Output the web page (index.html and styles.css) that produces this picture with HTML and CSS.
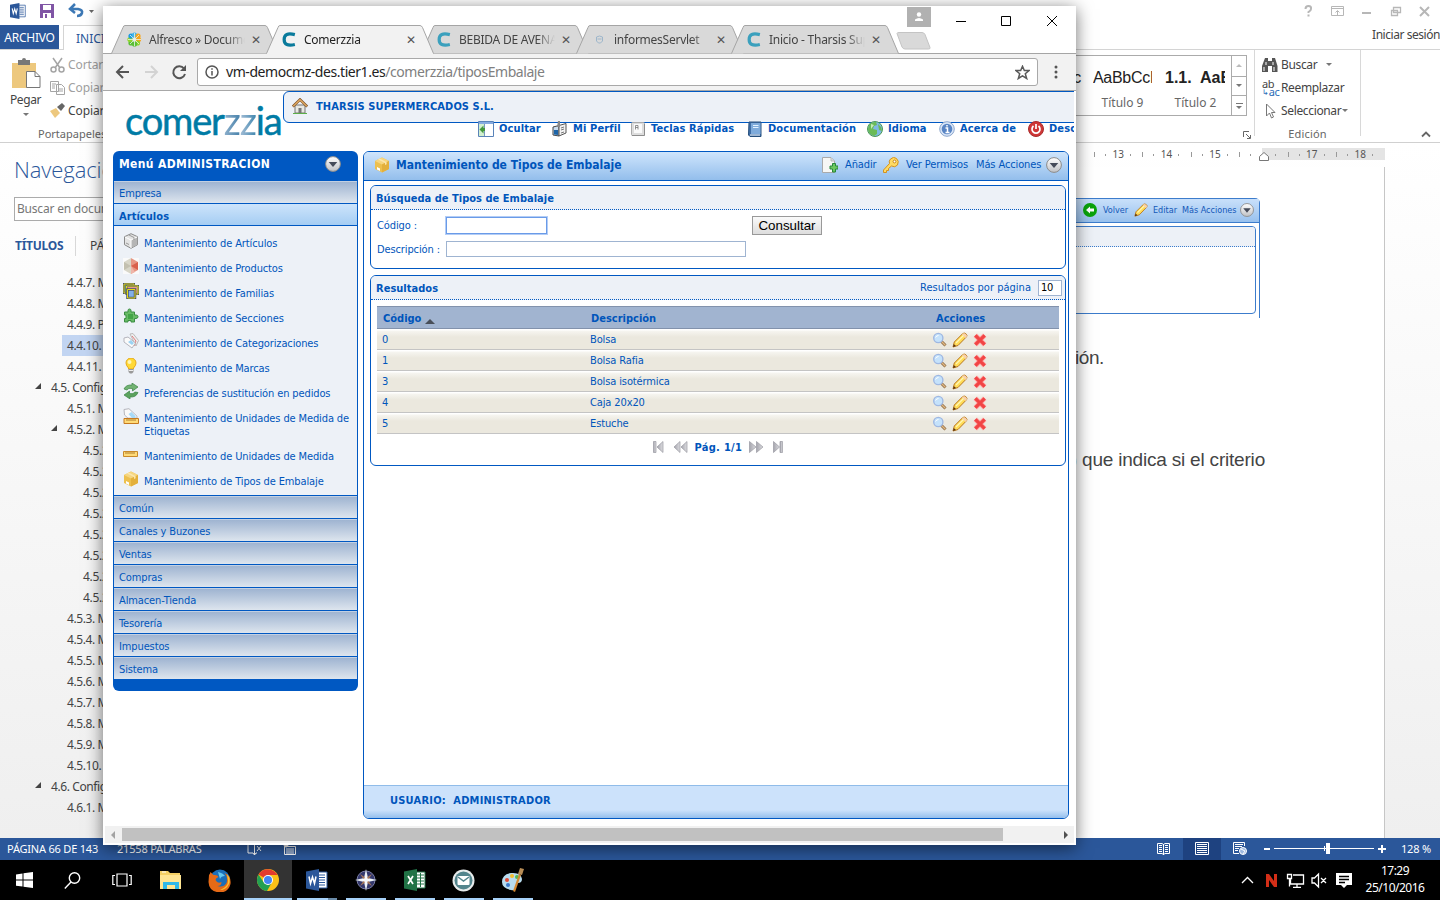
FILE: index.html
```html
<!DOCTYPE html>
<html lang="es">
<head>
<meta charset="utf-8">
<title>Comerzzia</title>
<link rel="stylesheet" href="styles.css">
</head>
<body>
<svg class="defs" width="0" height="0">
  <defs>
    <linearGradient id="silver" x2="0" y2="1"><stop offset="0" stop-color="#fff"/><stop offset="1" stop-color="#bfc1c5"/></linearGradient>
    <linearGradient id="metal" x2="1" y2="0"><stop offset="0" stop-color="#a5a5ad"/><stop offset="1" stop-color="#dcdce0"/></linearGradient>
    <symbol id="i-box" viewBox="0 0 16 16"><path d="M8 .5 15 4v8l-7 3.5L1 12V4z" fill="#edc04e"/><path d="M8 .5 15 4 8 7.500 1 4z" fill="#f6d680"/><path d="M8 7.500 15 4v8l-7 3.500z" fill="#e3b03c"/><path d="m4 2.500 7 3.600v2l1.600-.8V5.200L5.800 1.600z" fill="#fbe6ac"/><path d="m3 10 3 1.500V14l-3-1.500z" fill="#fff"/></symbol>
    <symbol id="i-cube" viewBox="0 0 16 16"><path d="m8 .7 6.500 3v8L8 15.300l-6.500-3.600v-8z" fill="#e4e4e4" stroke="#888"/><path d="M8 7v8l6.300-3.500V4z" fill="#b5b5b5"/><path d="m2 4 6 3 6-3M8 7v8" fill="none" stroke="#fff"/><path d="m6 2 5 2.500V7M3 10l3 1.500" fill="none" stroke="#999"/></symbol>
    <symbol id="i-prod" viewBox="0 0 16 16"><path d="M0 0h16v16H0z" fill="#fafafa"/><path d="m8 0 7 4v8l-7 4z" fill="#e79583"/><path d="M8 0 1 4v8l7 4z" fill="#d8d6c8"/><path d="m8 8 7-4v8z" fill="#d9604c"/><path d="M8 8 1 12V4z" fill="#c3c0af"/><path d="m8 8 4 6-4 2z" fill="#efb5a9"/></symbol>
    <symbol id="i-fam" viewBox="0 0 16 16"><path d="M1 1h10v9H1z" fill="#78c47a" stroke="#46506a" stroke-width="2"/><path d="M1 1h10v9H1z" fill="none" stroke="#e5dc16"/><path d="M3.500 3h12v8h-12z" fill="#e89a8c" stroke="#46506a" stroke-width="2"/><path d="M3.500 3h11.500v8H3.500z" fill="none" stroke="#e5dc16"/><path d="M4.500 6.500h7.500v8.500H4.500z" fill="#82b0e8" stroke="#46506a" stroke-width="2.500"/><path d="M4.500 6.500h7.500v8.500H4.500z" fill="none" stroke="#e5dc16"/></symbol>
    <symbol id="i-puz" viewBox="0 0 16 16"><path d="M1.500 4H5V2.500Q5 1 6.500 1T8 2.500V4h3.500v3H13q2 0 2 1.700T13 10.500h-1.500V14H8v-1.500H5V14H1.500v-3.500H3V7H1.500z" fill="#68bb66" stroke="#3b8d42"/><path d="M5 6h5v5H5z" fill="#43a546"/></symbol>
    <symbol id="i-tags" viewBox="0 0 16 16"><path d="m7 1 3-.5 5.500 7L13 13z" fill="#eee" stroke="#bbb"/><path d="m9 3 4 5-2 5" fill="none" stroke="#e17878"/><path d="m1 5 4-1 7.500 6L9 15 1 9z" fill="#fafafa" stroke="#b5b5bd"/><path d="m5 9 3-2 3 3-2 2z" fill="#9cd3f3"/></symbol>
    <symbol id="i-bulb" viewBox="0 0 16 16"><path d="M5.500 10Q3 7.500 3 5a5 5 0 0 1 10 0q0 2.500-2.500 5v1h-5z" fill="#ffd936" stroke="#e5a91c"/><circle cx="6.500" cy="4" r="2" fill="#fff6b7"/><path d="M5.500 11h5v3L9 15.500H7L5.500 14z" fill="#999"/><path d="M6 12.500h4" stroke="#eee"/></symbol>
    <symbol id="i-cycle" viewBox="0 0 16 16"><path d="M1 6q2-4.500 8-4V0l6 4-5.500 4V5.500Q5 4.500 4 7z" fill="#72b373" stroke="#3a8344" stroke-width=".7"/><path d="M15 9.500q-2 5-8 4.500v2L1 12l5.500-4v2.500q4 1 5.500-1.500z" fill="#5ba35d" stroke="#3a8344" stroke-width=".7"/></symbol>
    <symbol id="i-rul" viewBox="0 0 16 16"><path d="M.5 5.500h14v5H.5z" fill="#ffdb78" stroke="#c98a2b"/><path d="M3 6v2m2-2v2m2-2v2m2-2v2m2-2v2" stroke="#9b651a" stroke-width=".8"/></symbol>
    <symbol id="i-tagrul" viewBox="0 0 16 16"><path d="M1 1.500 6 .7l8 7.500v2h-9L1.500 7z" fill="#fafafa" stroke="#b6b6bd"/><path d="m5.500 6 3-2 4 4v2H9z" fill="#a6daf8"/><path d="M1 10.500h14.500v5H1z" fill="#ffdb78" stroke="#c67920"/><path d="M4 11v2m2-2v2m2-2v2m2-2v2m2-2v2" stroke="#9b651a" stroke-width=".8"/></symbol>
    <symbol id="i-down" viewBox="0 0 16 16"><circle cx="8" cy="8" r="7.400" fill="url(#silver)" stroke="#8b8b8b"/><path d="M3.700 6h8.600L8 11z" fill="#454b59"/></symbol>
    <symbol id="i-home" viewBox="0 0 16 16"><path d="M3 7h10v8H3z" fill="#e8e8e2" stroke="#777"/><path d="M6.500 10h3v5.500h-3z" fill="#777"/><path d="m.8 8.500 7.200-7 7.200 7" fill="none" stroke="#80542a" stroke-width="2.600"/><path d="m1.200 8.300 6.800-6.600 6.800 6.600" fill="none" stroke="#e2ac63" stroke-width="1.200"/><path d="M1 15.500h14" stroke="#5cae48"/></symbol>
    <symbol id="i-hide" viewBox="0 0 16 16"><path d="M.5.500h15v15H.5z" fill="#fff" stroke="#5a83b9"/><path d="M1 1h14v2H1z" fill="#86abe0"/><path d="M1 3h5v12H1z" fill="#d2efcf"/><path d="M6.500 3v12" stroke="#7698be"/><path d="m5.500 4.500-4 4 4 4V10H7V7H5.500z" fill="#43973d"/></symbol>
    <symbol id="i-prof" viewBox="0 0 16 16"><path d="m1 6 6-1.500V15l-6-1z" fill="#caddef" stroke="#444"/><path d="m7 4.500 7-2V12l-7 3z" fill="#f2f2f2" stroke="#555"/><path d="M6 0h2v6H5z" fill="#888"/><path d="M2 9h4v5l-4-.5z" fill="#1d65a8"/><path d="m9 7 3-1M9 9l3-1m-3 4 3-1" stroke="#777"/></symbol>
    <symbol id="i-key" viewBox="0 0 16 16"><rect x="1.500" y="1.500" width="13" height="13" rx="1" fill="#ddd" stroke="#aaa"/><path d="M4 3h8v9H4z" fill="#fafafa"/><path d="M5.500 8.500v-4h2.500v4m-2.500-2h2.500" fill="none" stroke="#777" stroke-width=".8"/><path d="M2 14.500h12.500V3" fill="none" stroke="#8d8d8d"/></symbol>
    <symbol id="i-book" viewBox="0 0 16 16"><path d="M2 1h12v14.500H3L1.500 14z" fill="#3f6ea6" stroke="#264f7d"/><path d="M4 2h9.500v11H4z" fill="#7fabdb"/><path d="M6 4.500h5.500M6 6.500h5.500" stroke="#e4f2ff"/><path d="M3 14h10" stroke="#fff"/></symbol>
    <symbol id="i-world" viewBox="0 0 16 16"><circle cx="8" cy="8" r="7.500" fill="#7fb8e4" stroke="#4d9a54"/><path d="M2 4Q5 .5 9 1l1 3-3 1-1 3 4 1v4l-3 2Q1 13 1 8zM11 3l3 3 1 4-3-1z" fill="#6abb56"/><path d="m4 3 3 1-3 4z" fill="#c6edb5"/></symbol>
    <symbol id="i-info" viewBox="0 0 16 16"><circle cx="8" cy="8" r="7.300" fill="#d9e6f7" stroke="#8da7cd"/><circle cx="8" cy="8" r="5.300" fill="#5985c4"/><path d="M6.500 7H8.500v4.500M6.500 11.500h4M8 4v1.500" stroke="#fff" stroke-width="1.500" fill="none"/></symbol>
    <symbol id="i-power" viewBox="0 0 16 16"><circle cx="8" cy="8" r="7.500" fill="#cf3737" stroke="#a92c2c"/><path d="M5.500 5a4 4 0 1 0 5 0M8 3v5" stroke="#fff" stroke-width="1.700" fill="none"/></symbol>
    <symbol id="i-add" viewBox="0 0 16 16"><path d="M.5.500H9l3.500 3.500v11.500H.5z" fill="#f7f7f5" stroke="#aaa"/><path d="M9 1v3h3" fill="#ddd" stroke="#bbb"/><path d="M10.500 6.500h3v2.500H16v3h-2.500v3h-3v-3H8V9h2.500z" fill="#6cc75e" stroke="#26873a"/></symbol>
    <symbol id="i-perm" viewBox="0 0 16 16"><path d="m6.500 6.500-6 6.500v2.500h3v-2h2v-2l3-2.500Q12 11 14.500 8q2-4-1-6.500T7.500 2q-2 2-1 4.500z" fill="#ffdb63" stroke="#d29120"/><circle cx="11.500" cy="4.500" r="1.400" fill="#fff" stroke="#c4851b"/></symbol>
    <symbol id="i-zoom" viewBox="0 0 16 16"><path d="m9 9 4.500 4.500" stroke="#8c6c48" stroke-width="3"/><path d="m9 9 4.300 4.300" stroke="#e2b780" stroke-width="1.300"/><circle cx="6.300" cy="6" r="4.600" fill="#c5e2fb" stroke="#9fb8e2" stroke-width="1.400"/><path d="M3.500 5.500q1-2 3-2" stroke="#fff" fill="none"/></symbol>
    <symbol id="i-pen" viewBox="0 0 16 16"><path d="m1 15 1.300-5 8.500-8.500q1.500-1 3.200.3t.5 3L6 13.500z" fill="#ffdc57" stroke="#b8761f"/><path d="m10 2.500 1.500-1.300q3 0 3.500 3L13.500 6z" fill="#f7d0ac"/><path d="m4 11 7.500-7.500" stroke="#fff6b4" stroke-width="1.300"/><path d="m1 15 .8-3 2.200 2z" fill="#583413"/></symbol>
    <symbol id="i-del" viewBox="0 0 16 16"><path d="m3.300 3.300 9.400 9.400m0-9.400-9.400 9.400" stroke="#ffa4a4" stroke-width="4.800"/><path d="m3.300 3.300 9.400 9.400m0-9.400-9.400 9.400" stroke="#f14545" stroke-width="3.300"/></symbol>
    <symbol id="i-star" viewBox="0 0 14 14"><path d="m7 1.200 1.700 4h4.400l-3.500 2.900 1.300 4.500L7 10.100l-3.900 2.500 1.300-4.500L.9 5.200h4.400z" fill="none" stroke="#5a5a5a" stroke-width="1.400"/></symbol>
    <symbol id="i-tab" viewBox="0 0 168 29" preserveAspectRatio="none"><path d="M.5 28.500 12 2.500Q12.500.500 14 .500h140q1.500 0 2.500 2l11 26" stroke="#a5a5a5"/></symbol>
    <symbol id="i-c" viewBox="0 0 14 14"><path d="M12 2.500Q2 0 2 7t10 4.700" fill="none" stroke="currentColor" stroke-width="3"/></symbol>
    <symbol id="i-word" viewBox="0 0 22 22"><path d="M10 3h11v16H10z" fill="#fff" stroke="#2b579a"/><path d="M13 6h6m-6 2.500h6M13 11h6m-6 2.500h6M13 16h6" stroke="#2b579a"/><path d="M0 2.500 13 0v22L0 19.500z" fill="#2b579a"/><path d="m3 7.500 1.500 7 2-6.500 2 6.500 1.500-7" fill="none" stroke="#fff" stroke-width="1.500"/></symbol>
  </defs>
</svg>
<div class="desktop">
  <section class="word">
    <header class="word-title">
      <svg class="quick" width="103" height="25" viewBox="0 0 103 25">
        <svg x="10" y="3" width="16" height="16"><use href="#i-word"/></svg>
        <path d="M40 4h14v14H40z" fill="#8055a5"/><path d="M43 5h8v5h-8zM43 13h8v5h-8z" fill="#fff"/><path d="M45 14h2v4h-2z" fill="#8055a5"/>
        <path d="M75 4 70 9l5 4M70.500 9H78q5 1 4 4t-5 3" fill="none" stroke="#3c78b5" stroke-width="2.500"/><path d="M89 10h5l-2.500 3z" fill="#666"/>
      </svg>
      <svg width="140" height="24" viewBox="0 0 140 24" fill="none" stroke="#b7b7b7" stroke-width="1.500">
        <path d="M5.500 9q0-3 3-3t2.500 3q0 1.500-2.500 3v1m0 1.500v2" stroke-width="2"/><path d="M31.500 6.500h12v9h-12zM31.500 8.500h12M37.500 15v-4m-2 1.500 2-2 2 2" stroke-width="1"/><path d="M62 13h9" stroke-width="2"/><path d="M93.500 7.500h7v5h-7zM91.500 10.500h6v5h-6z" stroke-width="1.300"/><path d="m120 7 9 9m0-9-9 9" stroke-width="2"/>
      </svg>
    </header>
    <div class="word-tabs"><span class="file">ARCHIVO</span><span class="start">INICIO</span><span class="login">Iniciar sesión</span></div>
    <div class="ribbon">
      <div class="clip">
        <div class="clip-row">
          <div class="paste">
            <svg width="30" height="34" viewBox="0 0 30 34"><path d="M1 5h24v25H1z" fill="#edc87e"/><path d="M7 2h4q0-2 2-2t2 2h4v5H7z" fill="#777"/><path d="M15.500 13.500H24l5 5v11H15.500z" fill="#fff" stroke="#777"/><path d="M24 13.500v5h5" fill="none" stroke="#777"/></svg>
            <span>Pegar</span><i class="caret"></i>
          </div>
          <div class="clip-list">
            <div class="off"><svg width="15" height="16" viewBox="0 0 15 16" fill="none" stroke="#a5a5a5" stroke-width="1.500"><path d="m3 1 7 10M12 1 5 11"/><circle cx="3.500" cy="12.500" r="2.500"/><circle cx="11.500" cy="12.500" r="2.500"/></svg>Cortar</div>
            <div class="off"><svg width="15" height="16" viewBox="0 0 15 16" fill="#fff" stroke="#a5a5a5"><path d="M.5 1.500h8v10h-8zM6.500 4.500h5l3 3v7h-8z"/><path d="M2 4h4M2 6h3M2 8h3M8 9h5M8 11h5"/></svg>Copiar</div>
            <div><svg width="15" height="16" viewBox="0 0 15 16"><path d="m0 8 6-3 4 5-5 5z" fill="#edc87e"/><path d="m7 4 5-4 3 3-4 5z" fill="#666"/></svg>Copiar formato</div>
          </div>
        </div>
        <div class="cap">Portapapeles</div>
      </div>
      <div class="styles">
        <div class="gallery">
          <div class="sty part"><b>c</b></div>
          <div class="sty nine"><b>AaBbCcD</b><span>Título 9</span></div>
          <div class="sty two"><b>1.1.&nbsp; AaB</b><span>Título 2</span></div>
          <div class="spin"><div><i class="caret up"></i></div><div><i class="caret"></i></div><div><i class="bar"></i><i class="caret"></i></div></div>
        </div>
        <svg class="launcher" width="8" height="8" viewBox="0 0 8 8" fill="none" stroke="#666"><path d="M.5 6V.5H6M3 3l4 4M7.500 4v3.500H4"/></svg>
      </div>
      <div class="edit">
        <div><svg width="16" height="14" viewBox="0 0 16 14"><path d="M3 0h3v3h4V0h3l2.500 8v6H10V8H6v6H0V8z" fill="#555"/><path d="M2 9v4m10-4v4M4 4v3m7-3v3" stroke="#fff"/></svg>Buscar<i class="caret"></i></div>
        <div><span class="abac"><em>ab</em><em>↳<b>ac</b></em></span>Reemplazar</div>
        <div><svg width="16" height="16" viewBox="0 0 16 16"><path d="M4.500 1v12l3-3 2 5 2-1-2-4.500h3.500z" fill="#fff" stroke="#777"/></svg>Seleccionar<i class="caret near"></i></div>
        <div class="cap">Edición</div>
      </div>
      <svg class="fold" width="10" height="7" viewBox="0 0 10 7" fill="none" stroke="#666" stroke-width="1.800"><path d="m1 5.500 4-4 4 4"/></svg>
    </div>
    <div class="word-body">
      <nav class="navpane">
        <h2>Navegación</h2>
        <div class="find">Buscar en documento</div>
        <div class="navtabs"><b>TÍTULOS</b><span>PÁGINAS</span></div>
        <ul>
          <li>4.4.7. M</li><li>4.4.8. M</li><li>4.4.9. P</li><li class="sel">4.4.10.</li><li>4.4.11.</li>
          <li class="top">4.5. Configuración</li><li>4.5.1. M</li><li class="open">4.5.2. M</li>
          <li class="sub">4.5.2.1</li><li class="sub">4.5.2.2</li><li class="sub">4.5.2.3</li><li class="sub">4.5.2.4</li><li class="sub">4.5.2.5</li><li class="sub">4.5.2.6</li><li class="sub">4.5.2.7</li><li class="sub">4.5.2.8</li>
          <li>4.5.3. M</li><li>4.5.4. M</li><li>4.5.5. M</li><li>4.5.6. M</li><li>4.5.7. M</li><li>4.5.8. M</li><li>4.5.9. M</li><li>4.5.10.</li>
          <li class="top">4.6. Configuración</li><li>4.6.1. M</li>
        </ul>
      </nav>
      <div class="doc">
        <div class="ruler"><span>13</span><span>14</span><span>15</span><span class="blank"></span><span>17</span><span>18</span><svg width="10" height="9" viewBox="0 0 10 9"><path d="M.5 8.500v-4l4.500-4 4.500 4v4z" fill="#fff" stroke="#777"/></svg></div>
        <div class="page">
          <div class="shot">
            <div class="shot-head"><svg width="14" height="14" viewBox="0 0 14 14"><circle cx="7" cy="7" r="7" fill="#0aa30a"/><path d="M3 7l4-3.500v2h4v3H7v2z" fill="#fff"/></svg><span class="s1">Volver</span><svg width="14" height="14"><use href="#i-pen"/></svg><span class="s2">Editar</span><span class="s3">Más Acciones</span><svg width="14" height="14"><use href="#i-down"/></svg></div>
            <div class="shot-box"><div></div></div>
          </div>
          <p class="p1">descripción.</p>
          <p class="p2">(campo) que indica si el criterio</p>
        </div>
      </div>
    </div>
    <footer class="status">
      <span>PÁGINA 66 DE 143</span><span class="words">21558 PALABRAS</span>
      <svg width="50" height="14" viewBox="0 0 50 14" fill="none" stroke="#fff"><path d="M1 1v10h5l1.500 2L9 11h1M7.500 1v12M10 4l4 5m0-5-4 5"/><path d="M37.500 4.500h11v8h-11zM39 7h8M39 9h8M39 11h8"/><circle cx="39" cy="3" r="2" fill="#fff"/></svg>
      <div class="views">
        <svg class="v1" width="38" height="22" viewBox="0 0 38 22" fill="none" stroke="#fff"><path d="M12.500 5.500H17l1.500 1 1.500-1h4.500v10H20l-1.500 1-1.500-1h-4.500zM18.500 6v11M14 7.500h3m3 0h3M14 9.500h3m3 0h3m-9 2h3m3 0h3m-9 2h3m3 0h3"/></svg>
        <svg class="v2" width="38" height="22" viewBox="0 0 38 22" fill="none" stroke="#fff"><path d="M12.500 4.500h13v12h-13zM14 6.500h10M14 8.500h10M14 10.500h10M14 12.500h10M14 14.500h10"/></svg>
        <svg width="38" height="22" viewBox="0 0 38 22" fill="none" stroke="#fff"><path d="M23.500 8V4.500h-11v11H18M14 6.500h8M14 8.500h7M14 10.500h4M14 12.500h3"/><circle cx="22" cy="13" r="3.500" fill="#9cb8df"/><path d="m20 11 4 2-2 3"/></svg>
      </div>
      <svg width="124" height="14" viewBox="0 0 124 14" stroke="#fff"><path d="M1 7h6" stroke-width="2"/><path d="M11 6.500h100M61.500 4v5"/><path d="M63 1h4v11h-4z" fill="#fff" stroke="none"/><path d="M115 7h8m-4-4v8" stroke-width="2"/></svg>
      <span class="pct">128 %</span>
    </footer>
  </section>

  <section class="chrome">
    <header class="strip">
      <div class="tab"><svg class="shape"><use href="#i-tab"/></svg><svg class="fav" width="15" height="15" viewBox="0 0 15 15"><g fill="#5abf35"><circle cx="11.500" cy="7.500" r="2.600" fill="#f7a51b"/><circle cx="10.500" cy="11" r="2.600" fill="#8fd42c"/><circle cx="7.500" cy="12" r="2.600"/><circle cx="4" cy="11" r="2.600"/><circle cx="3" cy="7.500" r="2.600" fill="#8fd42c"/><circle cx="4" cy="4" r="2.600" fill="#1d9be0"/><circle cx="7.500" cy="3" r="2.600" fill="#3fb3ee"/><circle cx="11" cy="4" r="2.600" fill="#f7a51b"/></g><path d="M7.500 1v13M1 7.500h13M3 3l9 9m0-9-9 9" stroke="#e8f4e8" stroke-width=".8"/></svg><span>Alfresco » Documentos</span><i>✕</i></div>
      <div class="tab on"><svg class="shape"><use href="#i-tab"/></svg><svg class="fav" width="14" height="15"><use href="#i-c"/></svg><span>Comerzzia</span><i>✕</i></div>
      <div class="tab"><svg class="shape"><use href="#i-tab"/></svg><svg class="fav" width="14" height="15"><use href="#i-c"/></svg><span>BEBIDA DE AVENA Y</span><i>✕</i></div>
      <div class="tab"><svg class="shape"><use href="#i-tab"/></svg><svg class="fav" width="14" height="15" viewBox="0 0 14 15"><path d="M4 5q3-2 6 0v4L8 11H6L4 9zM5 7h4" fill="none" stroke="#9db6cb"/></svg><span>informesServlet</span><i>✕</i></div>
      <div class="tab"><svg class="shape"><use href="#i-tab"/></svg><svg class="fav" width="14" height="15"><use href="#i-c"/></svg><span>Inicio - Tharsis Supermercados</span><i>✕</i></div>
      <svg class="newtab" width="36" height="18" viewBox="0 0 36 18"><path d="M1 1.500Q1 .500 3 .500h23q2 0 3 2l5 13q.500 1.500-1.500 1.500H9q-2 0-3-2z" fill="#d9d9d9" stroke="#c4c4c4"/></svg>
      <div class="user"><svg width="10" height="10" viewBox="0 0 10 10" fill="#fff"><circle cx="5" cy="2.500" r="2.200"/><path d="M1 9V7.500q4-3 8 0V9z"/></svg></div>
      <svg class="winbtn" width="110" height="14" viewBox="0 0 110 14" fill="none" stroke="#000"><path d="M4 7.500h10M49.500 2.500h9v9h-9zM95 2l10 10m0-10L95 12"/></svg>
    </header>
    <div class="toolbar">
      <svg width="76" height="16" viewBox="0 0 76 16" fill="none" stroke="#555" stroke-width="2"><path d="M15 8H3m6-6L3 8l6 6"/><path d="M31 8h12m-6-6 6 6-6 6" stroke="#d3d3d3"/><path d="M70 4.500A6 6 0 1 0 71 10"/><path d="M72 1v6h-6z" fill="#555" stroke="none"/></svg>
      <div class="url"><svg width="14" height="14" viewBox="0 0 14 14" fill="none" stroke="#555" stroke-width="1.500"><circle cx="7" cy="7" r="6"/><path d="M7 6v4.500M7 3.200v1.600"/></svg><span><b>vm-democmz-des.tier1.es</b>/comerzzia/tiposEmbalaje</span><svg class="star" width="15" height="15"><use href="#i-star"/></svg></div>
      <svg width="4" height="14" viewBox="0 0 4 14" fill="#555"><circle cx="2" cy="2" r="1.500"/><circle cx="2" cy="7" r="1.500"/><circle cx="2" cy="12" r="1.500"/></svg>
    </div>
    <div class="view">
      <div class="head">
        <div class="logo">comer<span>zz</span>ia</div>
        <div class="head-r">
          <div class="company"><svg width="16" height="16"><use href="#i-home"/></svg>THARSIS SUPERMERCADOS S.L.</div>
          <div class="links">
            <a><svg><use href="#i-hide"/></svg>Ocultar</a><a><svg><use href="#i-prof"/></svg>Mi Perfil</a><a><svg><use href="#i-key"/></svg>Teclas Rápidas</a><a><svg><use href="#i-book"/></svg>Documentación</a><a><svg><use href="#i-world"/></svg>Idioma</a><a><svg><use href="#i-info"/></svg>Acerca de</a><a><svg><use href="#i-power"/></svg>Desconectar</a>
          </div>
        </div>
      </div>
      <div class="cols">
        <aside class="menu">
          <div class="menu-h">Menú ADMINISTRACION<svg width="16" height="16"><use href="#i-down"/></svg></div>
          <div class="m">Empresa</div>
          <div class="m act">Artículos</div>
          <div class="subs">
            <a><svg><use href="#i-cube"/></svg><span>Mantenimiento de Artículos</span></a>
            <a><svg><use href="#i-prod"/></svg><span>Mantenimiento de Productos</span></a>
            <a><svg><use href="#i-fam"/></svg><span>Mantenimiento de Familias</span></a>
            <a><svg><use href="#i-puz"/></svg><span>Mantenimiento de Secciones</span></a>
            <a><svg><use href="#i-tags"/></svg><span>Mantenimiento de Categorizaciones</span></a>
            <a><svg><use href="#i-bulb"/></svg><span>Mantenimiento de Marcas</span></a>
            <a><svg><use href="#i-cycle"/></svg><span>Preferencias de sustitución en pedidos</span></a>
            <a><svg><use href="#i-tagrul"/></svg><span>Mantenimiento de Unidades de Medida de<br>Etiquetas</span></a>
            <a><svg><use href="#i-rul"/></svg><span>Mantenimiento de Unidades de Medida</span></a>
            <a><svg><use href="#i-box"/></svg><span>Mantenimiento de Tipos de Embalaje</span></a>
          </div>
          <div class="m">Común</div><div class="m">Canales y Buzones</div><div class="m">Ventas</div><div class="m">Compras</div><div class="m">Almacen-Tienda</div><div class="m">Tesorería</div><div class="m">Impuestos</div><div class="m">Sistema</div>
        </aside>
        <main class="panel">
          <div class="panel-h"><svg width="16" height="16"><use href="#i-box"/></svg><h1>Mantenimiento de Tipos de Embalaje</h1>
            <div class="acts"><svg><use href="#i-add"/></svg><span class="a1">Añadir</span><svg><use href="#i-perm"/></svg><span class="a2">Ver Permisos</span><span class="a3">Más Acciones</span><svg><use href="#i-down"/></svg></div>
          </div>
          <div class="inner">
            <section class="box search">
              <h3>Búsqueda de Tipos de Embalaje</h3>
              <div class="form">
                <label>Código :</label><i class="in focus"></i><button>Consultar</button>
                <label>Descripción :</label><i class="in wide"></i>
              </div>
            </section>
            <section class="box res">
              <h3>Resultados<span class="per">Resultados por página<i>10</i></span></h3>
              <div class="tbl">
                <div class="tr th"><span>Código <i></i></span><span>Descripción</span><span>Acciones</span></div>
                <div class="tr"><span>0</span><span>Bolsa</span><span><svg><use href="#i-zoom"/></svg><svg><use href="#i-pen"/></svg><svg><use href="#i-del"/></svg></span></div>
                <div class="tr"><span>1</span><span>Bolsa Rafia</span><span><svg><use href="#i-zoom"/></svg><svg><use href="#i-pen"/></svg><svg><use href="#i-del"/></svg></span></div>
                <div class="tr"><span>3</span><span>Bolsa isotérmica</span><span><svg><use href="#i-zoom"/></svg><svg><use href="#i-pen"/></svg><svg><use href="#i-del"/></svg></span></div>
                <div class="tr"><span>4</span><span>Caja 20x20</span><span><svg><use href="#i-zoom"/></svg><svg><use href="#i-pen"/></svg><svg><use href="#i-del"/></svg></span></div>
                <div class="tr"><span>5</span><span>Estuche</span><span><svg><use href="#i-zoom"/></svg><svg><use href="#i-pen"/></svg><svg><use href="#i-del"/></svg></span></div>
              </div>
              <div class="pager">
                <svg width="36" height="12" viewBox="0 0 36 12" fill="url(#metal)" stroke="#9a9aa2" stroke-width=".7"><path d="M1.500.500h2.500v11H1.500z"/><path d="M11 .500v11L5 6z"/><path d="M28 .500v11L22 6z"/><path d="M35 .500v11L29 6z"/></svg>
                <b>Pág. 1/1</b>
                <svg width="36" height="12" viewBox="0 0 36 12" fill="url(#metal)" stroke="#9a9aa2" stroke-width=".7"><path d="M.5.500 7 6l-6.500 5.500z"/><path d="M7.500.500 14 6l-6.500 5.500z"/><path d="M24.500.500l6 5.500-6 5.500z"/><path d="M31 .500h2.500v11H31z"/></svg>
              </div>
            </section>
          </div>
          <div class="panel-f">USUARIO:&nbsp; ADMINISTRADOR</div>
        </main>
      </div>
    </div>
    <div class="scroll"><i class="l"></i><div></div><i class="r"></i></div>
  </section>

  <footer class="taskbar">
    <div><svg width="17" height="16" viewBox="0 0 17 16" fill="#fff"><path d="m0 2.500 6.500-1v6H0zM7.500 1.300 17 0v7.500H7.500zM0 8.500h6.500v6L0 13.700zM7.500 8.500H17V16l-9.500-1.300z"/></svg></div>
    <div><svg width="17" height="17" viewBox="0 0 17 17" fill="none" stroke="#fff" stroke-width="1.400"><circle cx="10.500" cy="6" r="5.200"/><path d="M7 10 .8 16.500"/></svg></div>
    <div><svg width="20" height="14" viewBox="0 0 20 14" fill="none" stroke="#fff" stroke-width="1.200"><path d="M5 1h10v12H5zM3 2.500H.8v9H3m14-9h2.200v9H17"/></svg></div>
    <div><svg width="23" height="20" viewBox="0 0 23 20"><path d="M1 1h8l2 2h10v16H1z" fill="#f5d064"/><path d="M1 5h21v14H1z" fill="#ffe592"/><path d="M4 12h16v7h-4v-4H8v4H4z" fill="#2fb8e8"/><path d="M3 2h4" stroke="#fff"/></svg></div>
    <div><svg width="23" height="23" viewBox="0 0 23 23"><circle cx="12" cy="10.500" r="10" fill="#1b6eb8"/><path d="M10 3q5 1 7 4-4 0-5 3z" fill="#65c7ee"/><path d="M1 6q1-1 1.500-3l3 3q4-.5 5 2-3 1-3 3 2 4 6 2 0 4-4 4 6 2 9-3 2-6-2-10 7 3 6 11-2 8-10 8.500Q1 23 .5 13z" fill="#e66a16"/><path d="M19 5q4 5 2 10-3 6-9 6 8-3 8-9z" fill="#fcc22e"/></svg></div>
    <div class="cur"><svg width="22" height="22" viewBox="0 0 22 22"><circle cx="11" cy="11" r="11" fill="#fbc117"/><path d="M11 11 1.500 5.500A11 11 0 0 1 20.500 6H11z" fill="#e33b2e"/><path d="M1.500 5.500A11 11 0 0 0 10 22l4.500-8-8-1z" fill="#22a052"/><circle cx="11" cy="11" r="5" fill="#fff"/><circle cx="11" cy="11" r="4" fill="#4285f4"/></svg></div>
    <div class="run two"><svg width="22" height="22"><use href="#i-word"/></svg></div>
    <div class="run"><svg width="22" height="22" viewBox="0 0 22 22"><circle cx="11" cy="11" r="9" fill="#34386c" stroke="#7b7fa8"/><path d="m11 0 2 9 9 2-9 2-2 9-2-9-9-2 9-2z" fill="#dce2ea"/><path d="m5 5 6 4 6-4-4 6 4 6-6-4-6 4 4-6z" fill="#a77859"/><path d="m11 3 1.500 6.500L19 11l-6.500 1.500L11 19l-1.500-6.500L3 11l6.500-1.500z" fill="#f6f8fb"/></svg></div>
    <div class="run"><svg width="22" height="22" viewBox="0 0 22 22"><path d="M10 3h11v16H10z" fill="#fff" stroke="#217346"/><path d="M13 6h7m-7 3h7m-7 3h7m-7 3h7M16.500 4v14" stroke="#217346"/><path d="M0 2.500 13 0v22L0 19.500z" fill="#217346"/><path d="m4 7 5 8m0-8-5 8" stroke="#fff" stroke-width="1.700"/></svg></div>
    <div class="run"><svg width="23" height="23" viewBox="0 0 23 23"><circle cx="11.500" cy="11.500" r="11" fill="#e8ecec"/><circle cx="11.500" cy="11.500" r="9" fill="#53858d"/><rect x="5.500" y="7" width="12" height="9" rx="1" fill="#fff"/><path d="m6 8 5.500 4L17 8" fill="none" stroke="#53858d" stroke-width="1.500"/></svg></div>
    <div class="run"><svg width="24" height="24" viewBox="0 0 24 24"><path d="M1 14Q1 6 10 5q10-1 11 6 0 4-4 4-3 1-2 5-1 3-5 2-9-2-9-8z" fill="#b8dcef"/><circle cx="6" cy="12" r="2" fill="#e34a35"/><circle cx="11" cy="8" r="2" fill="#f6bd2d"/><circle cx="16" cy="9" r="2" fill="#55b84c"/><circle cx="7" cy="17" r="2" fill="#3979cc"/><path d="m12 23 6-17 2 1-6 17z" fill="#d48831"/><path d="m17 6 2-6 4 1-2 6z" fill="#b88d56"/></svg></div>
    <div class="tray">
      <svg width="112" height="18" viewBox="0 0 112 18" fill="none" stroke="#fff" stroke-width="1.300"><path d="m1 12 5.500-5.500L12 12"/><path d="M25 16V3h3l5 7V3h3v13h-3l-5-7v7z" fill="#d32e17" stroke="none"/><path d="M49.500 7v6h13V4H52M46.500 3.500h4v4h-4zM48.500 8v7.500M56 13v3m-4 .3h8"/><path d="M71 7h2.500l4-4v13l-4-4H71zM80 7l5 5m0-5-5 5"/><path d="M95 2h16v12h-5l-3 3-3-3h-5z" fill="#fff" stroke="none"/><path d="M98 5.500h10m-10 3h10m-10 3h6" stroke="#000"/></svg>
      <p>17:29<br>25/10/2016</p>
    </div>
  </footer>
</div>
</body>
</html>
```
FILE: styles.css
```css
* { box-sizing: border-box; }
body { margin: 0; font-family: "Noto Sans", sans-serif; font-size: 12px; color: #444; }
h1, h2, h3, p, ul { margin: 0; padding: 0; }
i, em { font-style: normal; }
svg { flex: none; display: block; }
.defs { position: absolute; }
.desktop { position: relative; width: 1440px; height: 900px; overflow: hidden; display: flex; flex-direction: column; background: #000; }

/* word processor */
.word { height: 860px; display: flex; flex-direction: column; background: #fff; font-family: "Noto Sans", sans-serif; white-space: nowrap; }
.word-title { height: 25px; display: flex; justify-content: space-between; }
.word-tabs { height: 25px; display: flex; border-bottom: 1px solid #d4d4d4; line-height: 25px; }
.word-tabs .file { width: 59px; background: #2b579a; color: #fff; text-align: center; letter-spacing: -.25px; }
.word-tabs .start { width: 80px; margin-left: 4px; padding-left: 12px; border: 1px solid #d4d4d4; border-bottom: 0; color: #2b579a; background: #fff; height: 25px; }
.word-tabs .login { margin-left: auto; line-height: 20px; letter-spacing: -.45px; }
.ribbon { height: 93px; display: flex; position: relative; border-bottom: 1px solid #d0d0d0; letter-spacing: -.2px; }
.clip { width: 600px; }
.clip-row { display: flex; height: 74px; }
.paste { width: 50px; display: flex; flex-direction: column; align-items: center; padding: 8px 0 0 1px; letter-spacing: -.4px; }
.paste span { line-height: 16px; margin: 0 0 5px; }
.clip-list { padding-top: 3px; letter-spacing: -.1px; }
.clip-list div { height: 23px; display: flex; align-items: center; gap: 3px; }
.clip-list .off { color: #a0a0a0; }
.cap { color: #666; font-size: 11px; line-height: 19px; }
.clip .cap { padding-left: 38px; letter-spacing: 0; }
.caret { width: 0; height: 0; border: 3px solid transparent; border-top-color: #777; border-bottom: 0; display: inline-block; }
.caret.up { border: 3px solid transparent; border-bottom-color: #bbb; border-top: 0; }
.styles { width: 655px; border-right: 1px solid #d8d8d8; display: flex; flex-direction: column; align-items: flex-end; padding: 5px 7px 0 0; height: 86px; }
.gallery { height: 61px; border: 1px solid #ababab; display: flex; width: 400px; justify-content: flex-end; }
.sty { width: 73px; text-align: center; overflow: hidden; }
.sty b { display: block; height: 42px; font: 16px/43px "Liberation Sans", sans-serif; color: #222; overflow: hidden; letter-spacing: -.3px; }
.sty span { display: block; line-height: 10px; color: #666; letter-spacing: 0; padding-left: 2px; }
.sty.nine b { width: 59px; margin-left: 8px; text-align: left; }
.sty.two b { width: 60px; margin-left: 7px; font-weight: bold; text-align: left; letter-spacing: 0; }
.sty.part b { text-align: right; padding-right: 4px; }
.spin { width: 15px; border-left: 1px solid #ababab; display: flex; flex-direction: column; }
.spin div { height: 20px; display: flex; flex-direction: column; align-items: center; justify-content: center; gap: 2px; }
.spin div + div { border-top: 1px solid #ababab; }
.spin .bar { width: 7px; height: 1px; background: #777; }
.launcher { margin-top: 15px; margin-right: -4px; }
.edit { width: 106px; height: 86px; border-right: 1px solid #d8d8d8; padding: 3px 0 0 7px; }
.edit div { height: 23px; display: flex; align-items: center; gap: 3px; letter-spacing: -.35px; }
.edit .caret { margin-left: 6px; }
.edit .near { margin-left: -2px; }
.edit .cap { justify-content: center; font-size: 11px; padding-right: 7px; letter-spacing: .2px; }
.abac { width: 16px; display: flex; flex-direction: column; font-size: 11px; line-height: 8px; }
.abac em { height: 8px; display: flex; }
.abac em + em { font-size: 8px; color: #2b6cb8; }
.abac b { font-size: 11px; font-weight: normal; }
.fold { margin: 81px 0 0 60px; }
.word-body { height: 695px; display: flex; background: linear-gradient(#fff, #efefef); }
.navpane { width: 400px; }
.navpane h2 { font: 300 22px/30px "Open Sans", "Noto Sans", sans-serif; color: #2b579a; padding: 11px 0 0 14px; letter-spacing: -.1px; }
.find { margin: 13px 0 0 14px; height: 24px; border: 1px solid #ababab; background: #fff; line-height: 22px; padding-left: 2px; color: #777; letter-spacing: -.2px; }
.navtabs { display: flex; padding-left: 15px; margin-top: 15px; height: 20px; line-height: 20px; }
.navtabs b { width: 61px; border-right: 1px solid #d8d8d8; color: #2b579a; letter-spacing: -.25px; }
.navtabs span { padding-left: 14px; }
.navpane ul { list-style: none; padding-top: 16px; letter-spacing: -.4px; }
.navpane li { height: 21px; line-height: 21px; padding-left: 67px; }
.navpane li.sub { padding-left: 83px; letter-spacing: -.3px; }
.navpane li.sel { background: #c2d5f2; margin-left: 62px; padding-left: 5px; }
.navpane li.top, .navpane li.open { display: flex; align-items: center; padding-left: 35px; gap: 10px; }
.navpane li.open { padding-left: 51px; }
.navpane li.top::before, .navpane li.open::before { content: ""; border-left: 6px solid transparent; border-bottom: 6px solid #444; margin-top: -3px; }
.doc { width: 985px; }
.ruler { margin: 5px 0 0 676px; width: 309px; height: 12px; position: relative; display: flex; padding-left: 18px; font-size: 10px; line-height: 12px; color: #555; background: linear-gradient(90deg, #fff 186px, #e4e4e4 186px); }
.ruler span { flex: none; width: 48.400px; text-align: center; background: linear-gradient(#999, #999) 0 4px / 1px 5px no-repeat, linear-gradient(#999, #999) 11px 6px / 1px 2px no-repeat, linear-gradient(#999, #999) 36px 6px / 1px 2px no-repeat; }
.ruler svg { position: absolute; left: 183px; top: 4px; }
.page { margin-top: 7px; height: 671px; background: #fff; border-right: 1px solid #c6c6c6; padding: 31px 124px 0 400px; }
.shot { height: 120px; border: 1px solid #3c7ccc; border-bottom: 0; border-radius: 5px 5px 0 0; color: #1357b8; font: 9px "DejaVu Sans Condensed", "Noto Sans", sans-serif; }
.shot-head { height: 24px; background: linear-gradient(#c9e0fa, #98c1ee); border-bottom: 1px solid #3c7ccc; display: flex; align-items: center; justify-content: flex-end; padding: 0 5px 2px 0; }
.shot-head .s1 { width: 26px; margin: 0 5px 0 6px; }
.shot-head .s2 { width: 24px; margin: 0 5px 0 5px; }
.shot-head .s3 { width: 55px; margin-right: 3px; }
.shot-box { margin: 3px 3px 3px 4px; border: 1px solid #3c7ccc; border-radius: 4px; height: 88px; overflow: hidden; }
.shot-box div { height: 20px; background: #edf1f7; border-bottom: 1px dotted #3c7ccc; }
.p1, .p2 { font: 19px/22px "Liberation Sans", sans-serif; text-align: right; letter-spacing: -.4px; }
.p1 { margin: 29px 156px 0 0; }
.p2 { margin: 80px -5px 0 0; letter-spacing: -.2px; }
.status { height: 22px; background: #2b579a; color: #fff; display: flex; align-items: center; padding-left: 7px; font-size: 11px; letter-spacing: -.2px; line-height: 20px; padding-bottom: 1px; }
.status .words { margin: 0 45px 0 19px; }
.views { display: flex; margin-left: auto; margin-right: 4px; margin-bottom: -1px; }
.views .v2 { background: #1e4280; }
.pct { width: 53px; padding-left: 14px; }

/* browser window */
.chrome { position: absolute; left: 103px; top: 6px; width: 973px; height: 839px; background: #fff; box-shadow: 0 3px 16px rgba(0,0,0,.55); display: flex; flex-direction: column; white-space: nowrap; }
.strip { height: 48px; display: flex; align-items: flex-end; padding-left: 8px; position: relative; border-bottom: 1px solid #a5a5a5; }
.tab { position: relative; width: 168px; height: 29px; margin-right: -13px; margin-bottom: -1px; display: flex; align-items: center; padding-left: 16px; color: #444; fill: #d9d9d9; }
.tab.on { z-index: 2; fill: #f2f2f2; color: #222; }
.tab.on::after { content: ""; position: absolute; left: 1px; right: 1px; bottom: 0; height: 1px; background: #f2f2f2; }
.shape { position: absolute; left: 0; top: 0; width: 168px; height: 29px; }
.tab > *:not(.shape) { position: relative; }
.tab > .shape { position: absolute; }
.fav { color: #3ba0bd; width: 15px; }
.on .fav { color: #0a7b9c; }
.tab span { margin-left: 7px; width: 96px; overflow: hidden; -webkit-mask-image: linear-gradient(90deg, #000 78px, transparent 96px); mask-image: linear-gradient(90deg, #000 78px, transparent 96px); letter-spacing: -.25px; }
.tab i { font-size: 12px; width: 22px; text-align: center; color: #555; font-family: "DejaVu Sans", sans-serif; }
.newtab { margin: 0 0 3px 10px; }
.user { position: absolute; left: 804px; top: 1px; width: 24px; height: 20px; background: #b1b1b1; display: grid; place-items: center; }
.winbtn { position: absolute; left: 849px; top: 8px; }
.toolbar { height: 37px; background: #f2f2f2; border-bottom: 1px solid #a8a8a8; display: flex; align-items: center; padding-left: 11px; }
.url { width: 841px; height: 28px; margin: 0 16px 0 7px; background: #fff; border: 1px solid #a9a9a9; border-radius: 3px; display: flex; align-items: center; padding: 0 7px 0 7px; gap: 7px; color: #808080; font-size: 14px; }
.url b { font-weight: normal; color: #222; }
.url span { letter-spacing: -.44px; margin-top: -1px; }
.url .star { margin-left: auto; }
.view { height: 735px; margin: 0 2px; overflow: hidden; color: #0055bb; font: 11px "DejaVu Sans Condensed", "Noto Sans", sans-serif; letter-spacing: -.12px; }
.head { height: 60px; display: flex; }
.logo { flex: none; width: 178px; padding-left: 20px; font: 38px/58px Lato, sans-serif; color: #007ba5; letter-spacing: -1.150px; -webkit-text-stroke: .5px #007ba5; }
.logo span { background: linear-gradient(90deg, #8eb0cc, #4e86ae 45%, #9cb9d3 55%, #4187af); -webkit-background-clip: text; background-clip: text; color: transparent; -webkit-text-stroke: 0; }
.head-r { width: 1000px; flex: none; }
.company { height: 32px; border: 1px solid #0058c2; border-radius: 6px; background: #edf1f7; display: flex; align-items: center; gap: 8px; padding: 0 0 2px 8px; font-weight: bold; letter-spacing: .08px; }
.links { display: flex; padding-left: 195px; margin-top: -2px; font-weight: bold; letter-spacing: .12px; }
.links a { display: flex; gap: 5px; line-height: 15px; width: 74px; }
.links svg, .subs svg, .acts svg { width: 16px; height: 16px; }
.links a:nth-child(2) { width: 78px; }
.links a:nth-child(3) { width: 117px; }
.links a:nth-child(4) { width: 120px; }
.links a:nth-child(5) { width: 72px; }
.links a:nth-child(6) { width: 89px; }
.cols { display: flex; padding-left: 8px; gap: 5px; align-items: flex-start; }
.menu { width: 245px; height: 540px; background: #0058c2; border-radius: 6px; padding: 0 1px; }
.menu-h { height: 30px; display: flex; justify-content: space-between; padding: 5px 16px 0 5px; color: #fff; font-weight: bold; font-size: 12px; line-height: 17px; letter-spacing: .36px; }
.m { height: 22px; margin-bottom: 1px; background: linear-gradient(#9fb4d1, #dde5ee); border-top: 1px solid #c3d0e2; padding-left: 5px; line-height: 24px; }
.m.act { height: 21px; background: linear-gradient(#cde4fb, #a5cdf3); border-top: 0; font-weight: bold; line-height: 25px; letter-spacing: .05px; }
.subs { height: 269px; margin-bottom: 1px; background: #edf1f7; padding: 7px 0 0 9px; }
.subs a { display: flex; gap: 5px; }
.subs span { padding: 4px 0 8px; line-height: 13px; }
.panel { width: 706px; height: 668px; border: 1px solid #0058c2; border-radius: 6px; overflow: hidden; display: flex; flex-direction: column; }
.panel-h { height: 29px; background: linear-gradient(#cfe5fc, #93beec); border-bottom: 1px solid #0058c2; display: flex; align-items: center; padding: 0 6px 2px 10px; }
.panel-h h1 { font-size: 12px; margin: -1px 0 0 6px; letter-spacing: 0; }
.acts { margin-left: auto; display: flex; align-items: center; }
.acts span { padding-bottom: 2px; }
.a1 { width: 33px; margin: 0 5px 0 7px; }
.a2 { width: 64px; margin: 0 6px 0 7px; }
.a3 { width: 65px; margin-right: 5px; }
.inner { flex: 1; padding: 4px 2px 0 6px; }
.box { border: 1px solid #0058c2; border-radius: 6px; overflow: hidden; }
.box h3 { height: 24px; background: #edf1f7; border-bottom: 1px dotted #0058c2; font-size: 11px; line-height: 25px; padding: 0 3px 0 5px; display: flex; justify-content: space-between; letter-spacing: .02px; }
.search { height: 84px; }
.form { display: grid; grid-template-columns: 69px 306px 70px; grid-template-rows: 24px 24px; padding: 3px 0 0 6px; align-items: center; }
.in { width: 101px; height: 17px; border: 1px solid #9fb4d1; background: #fff; }
.in.focus { border-color: #6a9be8; box-shadow: 0 0 0 1px #b3cdf6; }
.in.wide { width: 300px; height: 16px; }
.form button { width: 70px; height: 19px; padding: 0; border: 1px solid #999; background: linear-gradient(#fafafa, #ddd); font: 13.333px/17px "Liberation Sans", sans-serif; color: #000; }
.res { height: 191px; margin-top: 6px; }
.per { display: flex; align-items: center; gap: 7px; font-weight: normal; line-height: 23px; }
.per i { width: 24px; height: 16px; border: 1px solid #9fb4d1; background: #fff; color: #000; line-height: 14px; padding-left: 2px; letter-spacing: -.4px; }
.tbl { margin: 6px 6px 0; }
.tr { height: 21px; display: grid; grid-template-columns: 208px 342px auto; padding-left: 5px; line-height: 21px; border-bottom: 1px solid #c4c4c4; background: linear-gradient(#fff 0 1px, #f6f5f0 2px, #ebe8de 40%, #ebe8de); }
.tr.th { height: 23px; padding-left: 6px; background: #a1b4d0; border-top: 1px solid #8292ac; border-bottom: 1px solid #8292ac; font-weight: bold; line-height: 24px; letter-spacing: 0; }
.th span:nth-child(3) { padding-left: 3px; }
.th i { display: inline-block; border: 5px solid transparent; border-top: 0; border-bottom-color: #494f59; vertical-align: -2px; }
.tr span:nth-child(3) { display: flex; gap: 4px; align-items: center; }
.tr.th span:nth-child(3) { display: block; }
.tr svg { width: 16px; height: 16px; }
.pager { display: flex; justify-content: center; align-items: center; gap: 7px; height: 25px; }
.pager b { width: 47px; letter-spacing: .3px; padding-top: 1px; }
.panel-f { height: 33px; border-top: 1px solid #90bce9; background: linear-gradient(#cce2fb 24px, #94bfed); padding-left: 26px; font-weight: bold; line-height: 30px; letter-spacing: .22px; }
.scroll { height: 17px; margin: 0 2px; background: #f1f1f1; display: flex; align-items: center; padding: 0 6px; justify-content: space-between; }
.scroll div { width: 881px; height: 13px; background: #c1c1c1; margin-left: 7px; margin-right: auto; }
.scroll i { border: 4px solid transparent; }
.scroll .l { border-right-color: #a3a3a3; border-left: 0; }
.scroll .r { border-left-color: #505050; border-right: 0; }

/* system taskbar */
.taskbar { height: 40px; display: flex; background: #000; }
.taskbar > div { width: 49px; display: grid; place-items: center; position: relative; }
.taskbar > div:first-child { width: 48px; }
.taskbar .cur { background: #333; box-shadow: inset 0 -2px #a6d1f8; width: 48px; }
.taskbar .run::after { content: ""; position: absolute; left: 5px; right: 4px; bottom: 0; height: 2px; background: #a6d1f8; }
.taskbar .two::after { background: linear-gradient(90deg, #a6d1f8 31px, #6a8ba8 31px); }
.taskbar > .tray { width: auto; margin-left: auto; display: flex; align-items: center; gap: 6px; color: #fff; padding-right: 4px; }
.tray p { width: 72px; text-align: center; line-height: 17px; letter-spacing: -.5px; margin: -2px 5px 0 0; }
```
